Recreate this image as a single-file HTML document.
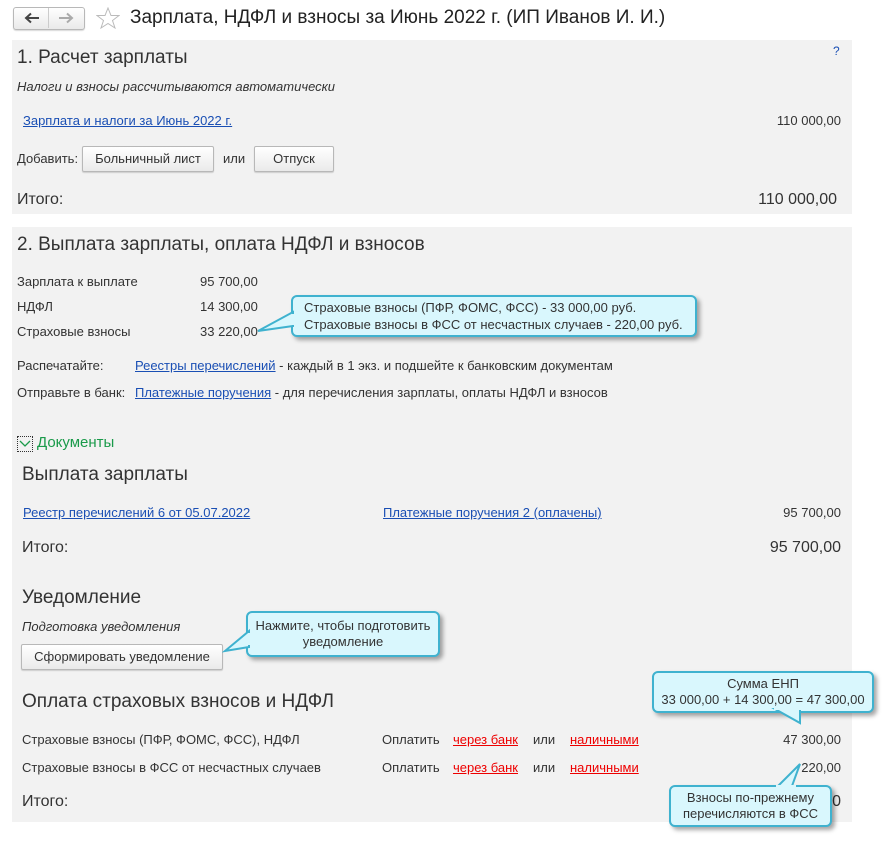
<!DOCTYPE html>
<html><head><meta charset="utf-8"><style>
body{margin:0;width:892px;height:844px;background:#fff;font-family:"Liberation Sans",Arial,sans-serif;color:#333;position:relative;overflow:hidden}
.a{position:absolute;white-space:nowrap}
.p{position:absolute;background:#f2f2f2}
.s{font-size:13px}
.lk{color:#1a4fb4;text-decoration:underline}
.rd{color:#e00;text-decoration:underline}
.h{font-size:19px;color:#333}
.btn{position:absolute;border:1px solid #b8b8b8;border-radius:2px;background:linear-gradient(#fff,#eaeaea);font-size:13px;text-align:center;box-shadow:0 1px 1px rgba(0,0,0,.15)}
.co{position:absolute;background:#d9f7fd;border:2px solid #3fb2cf;border-radius:6px;font-size:13px;color:#333;box-shadow:3px 3px 4px rgba(0,0,0,.35)}
</style></head><body>
<div class="btn" style="left:13px;top:7px;width:70px;height:21px;border-radius:3px"></div>
<div class="a" style="left:48px;top:8px;width:1px;height:20px;background:#ccc"></div>
<svg class="a" style="left:24px;top:12px" width="16" height="12"><path d="M15 6H3M7 1.5L2 6l5 4.5" fill="none" stroke="#444" stroke-width="2"/></svg>
<svg class="a" style="left:58px;top:12px" width="16" height="12"><path d="M1 6h12M9 1.5L14 6l-5 4.5" fill="none" stroke="#aaa" stroke-width="2"/></svg>
<svg class="a" style="left:96px;top:7px" width="24" height="22"><polygon points="12,1 15,8.5 23,8.5 16.5,13.5 19,21 12,16.5 5,21 7.5,13.5 1,8.5 9,8.5" fill="none" stroke="#bbb"/></svg>
<div class="a" style="left:130px;top:7px;font-size:19px;color:#222">Зарплата, НДФЛ и взносы за Июнь 2022 г. (ИП Иванов И. И.)</div>

<div class="p" style="left:12px;top:40px;width:840px;height:174px"></div>
<div class="a h" style="left:17px;top:47px">1. Расчет зарплаты</div>
<div class="a" style="left:833px;top:44px;font-size:12px;color:#1a4fb4">?</div>
<div class="a s" style="left:17px;top:79px;font-style:italic">Налоги и взносы рассчитываются автоматически</div>
<div class="a s lk" style="left:23px;top:113px">Зарплата и налоги за Июнь 2022 г.</div>
<div class="a s" style="right:51px;top:113px">110 000,00</div>
<div class="a s" style="left:17px;top:151px">Добавить:</div>
<div class="btn" style="left:82px;top:146px;width:130px;height:24px;line-height:24px">Больничный лист</div>
<div class="a s" style="left:223px;top:151px">или</div>
<div class="btn" style="left:254px;top:146px;width:78px;height:24px;line-height:24px">Отпуск</div>
<div class="a" style="left:17px;top:191px;font-size:16px">Итого:</div>
<div class="a" style="right:55px;top:191px;font-size:16px">110 000,00</div>

<div class="p" style="left:12px;top:227px;width:840px;height:595px"></div>
<div class="a h" style="left:17px;top:234px">2. Выплата зарплаты, оплата НДФЛ и взносов</div>
<div class="a s" style="left:17px;top:274px">Зарплата к выплате</div><div class="a s" style="left:200px;top:274px">95 700,00</div>
<div class="a s" style="left:17px;top:299px">НДФЛ</div><div class="a s" style="left:200px;top:299px">14 300,00</div>
<div class="a s" style="left:17px;top:324px">Страховые взносы</div><div class="a s" style="left:200px;top:324px">33 220,00</div>
<div class="a s" style="left:17px;top:358px">Распечатайте:</div>
<div class="a s" style="left:135px;top:358px"><span class="lk">Реестры перечислений</span> - каждый в 1 экз. и подшейте к банковским документам</div>
<div class="a s" style="left:17px;top:385px">Отправьте в банк:</div>
<div class="a s" style="left:135px;top:385px"><span class="lk">Платежные поручения</span> - для перечисления зарплаты, оплаты НДФЛ и взносов</div>
<div class="a" style="left:17px;top:436px;width:14px;height:14px;border:1px dotted #333"></div>
<svg class="a" style="left:19px;top:440px" width="12" height="8"><path d="M1 1L6 6L11 1" fill="none" stroke="#1a9a4a" stroke-width="1.3"/></svg>
<div class="a" style="left:37px;top:434px;font-size:15px;color:#1a9a4a">Документы</div>
<div class="a h" style="left:22px;top:464px">Выплата зарплаты</div>
<div class="a s lk" style="left:23px;top:505px">Реестр перечислений 6 от 05.07.2022</div>
<div class="a s lk" style="left:383px;top:505px">Платежные поручения 2 (оплачены)</div>
<div class="a s" style="right:51px;top:505px">95 700,00</div>
<div class="a" style="left:22px;top:539px;font-size:16px">Итого:</div>
<div class="a" style="right:51px;top:539px;font-size:16px">95 700,00</div>
<div class="a h" style="left:22px;top:587px">Уведомление</div>
<div class="a s" style="left:22px;top:619px;font-style:italic">Подготовка уведомления</div>
<div class="btn" style="left:21px;top:644px;width:200px;height:24px;line-height:24px">Сформировать уведомление</div>
<div class="a h" style="left:22px;top:691px">Оплата страховых взносов и НДФЛ</div>
<div class="a s" style="left:22px;top:732px">Страховые взносы (ПФР, ФОМС, ФСС), НДФЛ</div>
<div class="a s" style="left:382px;top:732px">Оплатить</div><div class="a s rd" style="left:453px;top:732px">через банк</div><div class="a s" style="left:533px;top:732px">или</div><div class="a s rd" style="left:570px;top:732px">наличными</div>
<div class="a s" style="right:51px;top:732px">47 300,00</div>
<div class="a s" style="left:22px;top:760px">Страховые взносы в ФСС от несчастных случаев</div>
<div class="a s" style="left:382px;top:760px">Оплатить</div><div class="a s rd" style="left:453px;top:760px">через банк</div><div class="a s" style="left:533px;top:760px">или</div><div class="a s rd" style="left:570px;top:760px">наличными</div>
<div class="a s" style="right:51px;top:760px">220,00</div>
<div class="a" style="left:22px;top:793px;font-size:16px">Итого:</div>
<div class="a" style="right:51px;top:793px;font-size:16px">0</div>

<div class="co" style="left:291px;top:295px;width:402px;height:38px;line-height:17px"><div style="padding:2px 0 0 11px">Страховые взносы (ПФР, ФОМС, ФСС) - 33 000,00 руб.<br>Страховые взносы в ФСС от несчастных случаев - 220,00 руб.</div></div>
<svg class="a" style="left:255px;top:310px" width="40" height="24"><polygon points="3,21 38,2 38,16" fill="#d9f7fd" stroke="#3fb2cf" stroke-width="2"/><rect x="37" y="4" width="4" height="11" fill="#d9f7fd"/></svg>

<div class="co" style="left:246px;top:611px;width:190px;height:42px;text-align:center;line-height:16px"><div style="padding-top:5px">Нажмите, чтобы подготовить<br>уведомление</div></div>
<svg class="a" style="left:222px;top:625px" width="30" height="30"><polygon points="3,26 27,6 27,22" fill="#d9f7fd" stroke="#3fb2cf" stroke-width="2"/><rect x="26" y="8" width="4" height="12" fill="#d9f7fd"/></svg>

<div class="co" style="left:652px;top:671px;width:218px;height:38px;text-align:center;line-height:16px"><div style="padding-top:3px">Сумма ЕНП<br>33 000,00 + 14 300,00 = 47 300,00</div></div>
<svg class="a" style="left:770px;top:708px" width="40" height="18"><polygon points="5,1 30,1 30,15" fill="#d9f7fd" stroke="#3fb2cf" stroke-width="2"/><rect x="4" y="-2" width="28" height="4" fill="#d9f7fd"/></svg>

<div class="co" style="left:669px;top:785px;width:159px;height:38px;text-align:center;line-height:16px"><div style="padding-top:3px">Взносы по-прежнему<br>перечисляются в ФСС</div></div>
<svg class="a" style="left:770px;top:762px" width="40" height="26"><polygon points="30,2 22,24 8,24" fill="#d9f7fd" stroke="#3fb2cf" stroke-width="2"/><rect x="6" y="23" width="20" height="4" fill="#d9f7fd"/></svg>
</body></html>
